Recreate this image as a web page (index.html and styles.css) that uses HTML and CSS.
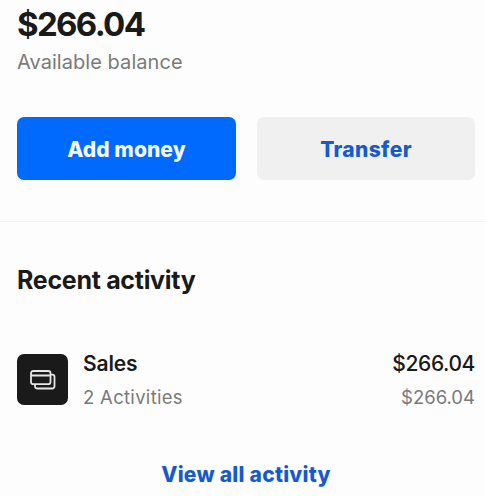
FILE: index.html
```html
<!DOCTYPE html>
<html lang="en">
<head>
<meta charset="utf-8">
<title>Balance</title>
<link rel="stylesheet" href="styles.css">
</head>
<body>
<main class="screen">
  <section class="balance">
    <h1 class="balance-amount">$266.04</h1>
    <p class="balance-label">Available balance</p>
    <div class="actions">
      <button class="button button-primary">Add money</button>
      <button class="button button-secondary">Transfer</button>
    </div>
  </section>
  <section class="activity">
    <h2 class="activity-title">Recent activity</h2>
    <div class="row">
      <div class="row-icon">
        <svg width="26" height="20" viewBox="0 0 26 20" fill="none" stroke="#e6e6e6" stroke-width="1.8">
          <rect x="1" y="1" width="19.5" height="13.2" rx="2.2"/>
          <path d="M1 5.5H20.5M20.5 4.6H22.2a2.3 2.3 0 0 1 2.3 2.3V16.2a2.3 2.3 0 0 1-2.3 2.3H7.3A2.3 2.3 0 0 1 5 16.2V14.2"/>
        </svg>
      </div>
      <div class="row-text">
        <div class="row-name">Sales</div>
        <div class="row-count">2 Activities</div>
      </div>
      <div class="row-values">
        <div class="row-total">$266.04</div>
        <div class="row-sub">$266.04</div>
      </div>
    </div>
    <a class="view-all">View all activity</a>
  </section>
</main>
</body>
</html>
```
FILE: styles.css
```css
* { box-sizing: border-box; margin: 0; padding: 0; }
body {
  background: #fdfdfd;
  color: #1a1a1a;
  font-family: Inter, sans-serif;
  overflow: hidden;
}
.screen { width: 485px; height: 496px; overflow: hidden; }
.balance {
  height: 222px;
  padding: 4px 10px 0 17px;
  border-bottom: 1.5px solid #f3f3f3;
}
.balance-amount { font-size: 33px; font-weight: 700; line-height: 40px; letter-spacing: -1.65px; }
.balance-label { margin-top: 5px; font-size: 20px; line-height: 26px; color: #7a7a7a; letter-spacing: 0.05px; }
.actions { display: grid; grid-template-columns: 219px 218px; gap: 21px; margin-top: 42.4px; }
.button {
  height: 63px;
  padding-top: 2px;
  border: 0;
  border-radius: 7px;
  font: 800 21px/26px Inter, sans-serif;
  letter-spacing: 0.05px;
}
.button-primary { background: #006aff; color: #f4f8ff; }
.button-secondary { background: #f0f0f0; color: #155bcd; letter-spacing: 0.35px; }
.activity { padding: 42px 10px 0 17px; }
.activity-title { font-size: 25px; font-weight: 700; line-height: 32px; letter-spacing: -0.3px; }
.row { display: flex; align-items: center; margin-top: 55px; height: 56px; }
.row-icon {
  display: flex;
  align-items: center;
  justify-content: center;
  width: 51px;
  height: 51px;
  padding-top: 1px;
  border-radius: 7px;
  background: #1a1a1a;
}
.row-text { margin-left: 15px; }
.row-values { margin-left: auto; text-align: right; }
.row-name, .row-total { padding-top: 2px; font-size: 21px; font-weight: 600; line-height: 28px; }
.row-name { letter-spacing: -0.15px; }
.row-total { letter-spacing: -0.4px; font-weight: 500; }
.row-count, .row-sub { margin-top: 6px; font-size: 18.5px; line-height: 26px; color: #7a7a7a; }
.row-count { letter-spacing: 0.3px; }
.view-all {
  display: block;
  margin: 55px 0 0;
  text-align: center;
  font-size: 21px;
  font-weight: 800;
  line-height: 26px;
  letter-spacing: 0.25px;
  color: #155bcd;
}
```
